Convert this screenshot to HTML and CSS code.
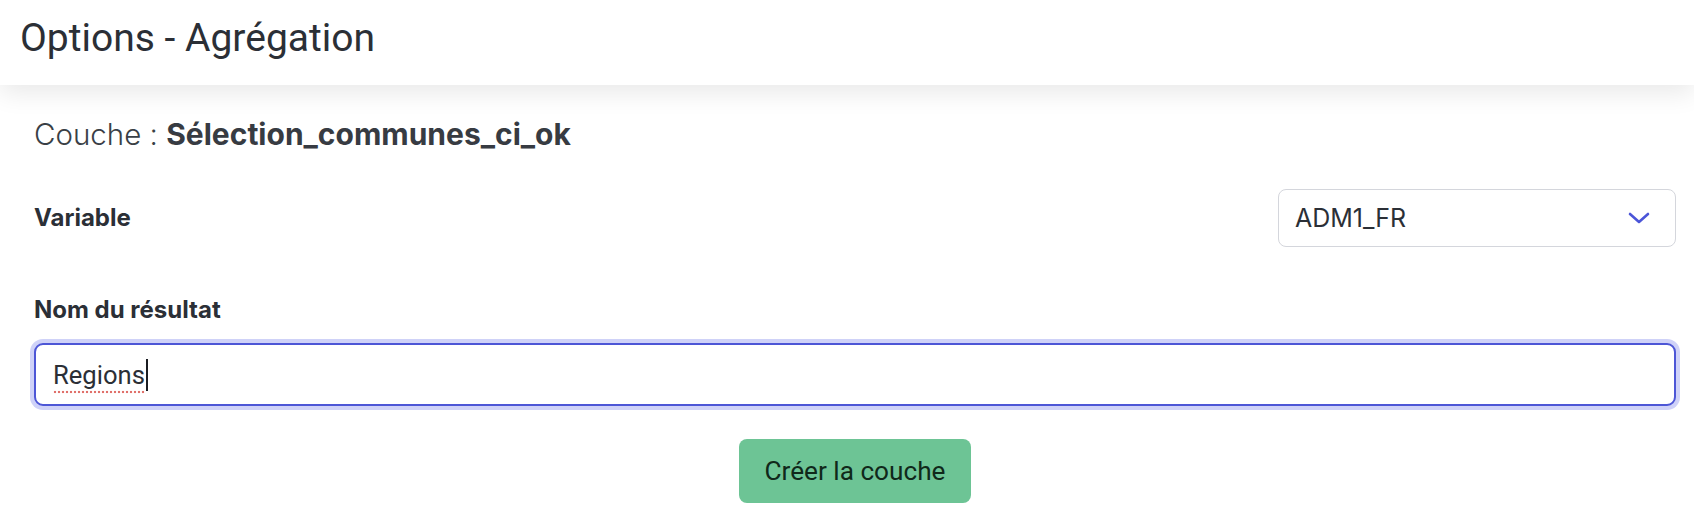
FILE: index.html
```html
<!DOCTYPE html>
<html lang="fr">
<head>
<meta charset="utf-8">
<title>Options - Agrégation</title>
<link rel="stylesheet" href="styles.css">
</head>
<body>
<header class="header">
  <h1 class="title">Options - Agrégation</h1>
</header>
<main class="content">
  <p class="layer">Couche : <strong>Sélection_communes_ci_ok</strong></p>
  <div class="field-row">
    <label class="label">Variable</label>
    <div class="select">
      <span class="select-value">ADM1_FR</span>
      <svg class="chevron" width="22" height="12" viewBox="0 0 22 12" aria-hidden="true"><path d="M2 2 L11 10 L20 2" fill="none" stroke="#4b55d8" stroke-width="2.6" stroke-linecap="round" stroke-linejoin="round"/></svg>
    </div>
  </div>
  <div class="field">
    <label class="label">Nom du résultat</label>
    <div class="input" role="textbox"><span class="typed">Regions</span><span class="caret"></span></div>
  </div>
  <div class="actions">
    <button class="btn" type="button">Créer la couche</button>
  </div>
</main>
</body>
</html>
```

FILE: styles.css
```css
* { box-sizing: border-box; }
html, body { margin: 0; padding: 0; background: #ffffff; }
body {
  font-family: Roboto, "Liberation Sans", sans-serif;
  color: #2b2f36;
  width: 1694px;
  height: 524px;
  overflow: hidden;
}
.header {
  height: 85px;
  padding: 19px 0 0 20px;
  background: #fff;
  box-shadow: 0 8px 24px rgba(0, 0, 0, 0.09);
  position: relative;
  z-index: 1;
}
.title {
  margin: 0;
  font-size: 39px;
  line-height: 39px;
  font-weight: 400;
  color: #2b2f36;
}
.content {
  padding: 35px 18px 0 34px;
}
.layer {
  margin: 0;
  font-family: Inter, Roboto, sans-serif;
  font-size: 29.5px;
  line-height: 29px;
  font-weight: 300;
  color: #3a3f46;
}
.layer strong { font-size: 30px; font-weight: 700; color: #373b42; }
.field-row {
  margin-top: 40px;
  display: flex;
  align-items: center;
  justify-content: space-between;
}
.label {
  font-family: Inter, Roboto, sans-serif;
  font-size: 24px;
  line-height: 24px;
  font-weight: 700;
  color: #2b2f36;
}
.select {
  width: 398px;
  height: 58px;
  border: 1.5px solid #d4d6dc;
  border-radius: 8px;
  display: flex;
  align-items: center;
  justify-content: space-between;
  padding: 0 25px 0 16px;
  background: #fff;
}
.select-value {
  font-family: Inter, Roboto, sans-serif;
  font-size: 25px;
  color: #2b2f36;
}
.chevron { display: block; }
.field {
  margin-top: 51px;
  display: flex;
  flex-direction: column;
  gap: 21px;
}
.input {
  height: 63px;
  border: 2px solid #4d56d6;
  border-radius: 9px;
  box-shadow: 0 0 0 4px #cfd2f8;
  display: flex;
  align-items: center;
  padding-left: 17px;
  font-size: 25.6px;
  color: #2b2f36;
  background: #fff;
}
.typed {
  padding-bottom: 4px;
  margin-top: 4px;
  background-image: radial-gradient(circle, #e0706a 1.2px, transparent 1.6px);
  background-size: 4px 4px;
  background-repeat: repeat-x;
  background-position: 0 100%;
}
.caret {
  display: inline-block;
  width: 2px;
  height: 32px;
  background: #1b1d22;
  margin-left: 1px;
}
.actions {
  margin-top: 33px;
  display: flex;
  justify-content: center;
}
.btn {
  width: 232px;
  height: 64px;
  border: 0;
  border-radius: 8px;
  background: #6dc495;
  color: #10281a;
  font-family: Roboto, "Liberation Sans", sans-serif;
  font-size: 26.2px;
  font-weight: 400;
  padding: 0;
}
```
